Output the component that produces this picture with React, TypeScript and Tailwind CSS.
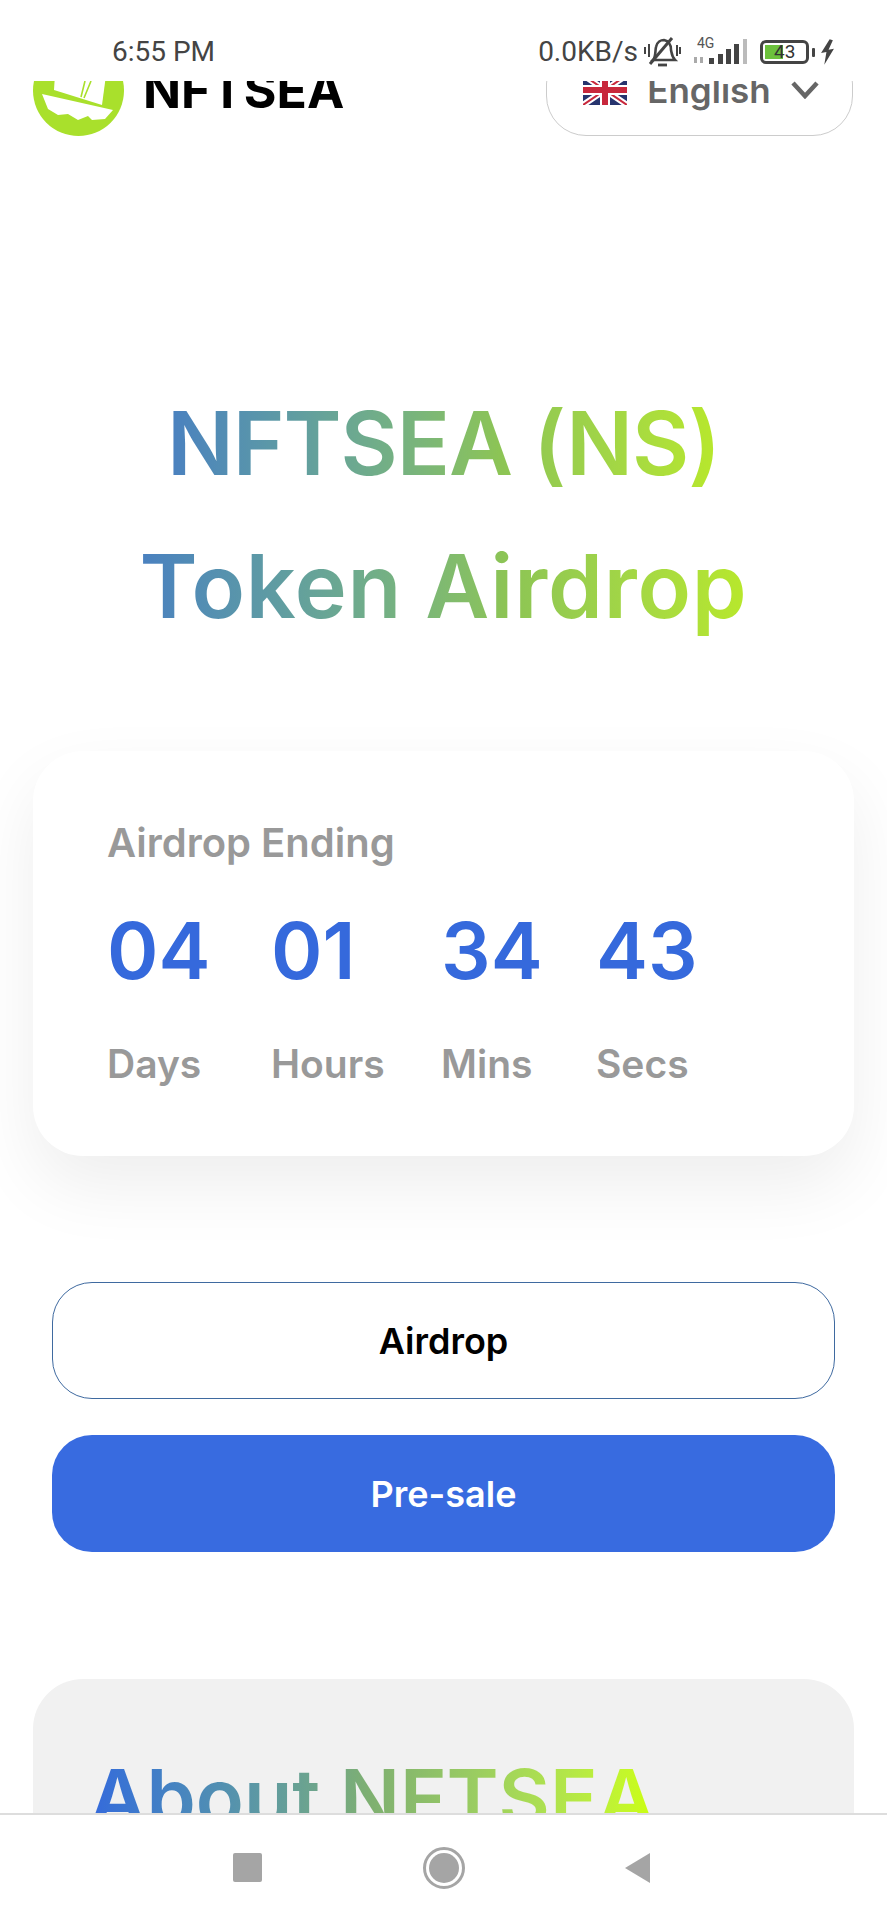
const titleFont = { fontFamily: 'Inter, "Liberation Sans", sans-serif' }

const timer = [
  { value: '04', label: 'Days' },
  { value: '01', label: 'Hours' },
  { value: '34', label: 'Mins' },
  { value: '43', label: 'Secs' },
]

function Logo() {
  return (
    <svg width="91" height="91" viewBox="0 0 91 91" className="shrink-0">
      <circle cx="45.5" cy="45.5" r="45.5" fill="#a9e02c" />
      <path d="M22 30 L73 30 L69 60 L21 45 Z" fill="#fff" />
      <path d="M9 49 L80 65 L72 74 L59 75 L55 71 L45 75 L35 69 L25 70 L15 64 Z" fill="#fff" />
      <path d="M52 36 L48 52 M58 36 L51 53" stroke="#a9e02c" strokeWidth="1.6" fill="none" />
    </svg>
  )
}

function UkFlag() {
  return (
    <svg width="44" height="30" viewBox="0 0 44 30" className="shrink-0">
      <rect width="44" height="30" fill="#27346e" />
      <path d="M0 0 L44 30 M44 0 L0 30" stroke="#fff" strokeWidth="6" />
      <path d="M0 0 L44 30 M44 0 L0 30" stroke="#c8283c" strokeWidth="2" />
      <path d="M22 0 V30 M0 15 H44" stroke="#fff" strokeWidth="10" />
      <path d="M22 0 V30 M0 15 H44" stroke="#c8283c" strokeWidth="6" />
    </svg>
  )
}

function StatusIcons() {
  return (
    <div className="flex items-center">
      <svg width="37" height="30" viewBox="0 0 37 30" fill="none" stroke="#444" className="ml-[6px]">
        <path d="M9 23 C12 20 11 14 12 10 C13 5 17 3 20 3 C25 4 27 8 27 13 C28 18 28 20 31 23 Z" strokeWidth="2.6" />
        <path d="M6 27 L28 1" strokeWidth="3" />
        <path d="M14 28 H23" strokeWidth="2.8" />
        <path d="M1 10 V17 M5 7 V20 M33 8 V19 M36 10 V17" strokeWidth="2" />
      </svg>
      <div className="relative ml-[12px] h-[26px] w-[55px]">
        <span className="absolute left-[4px] top-[-3px] text-[14px] leading-[15px] text-[#555]">4G</span>
        <svg width="55" height="26" viewBox="0 0 55 26" className="absolute left-0 top-0" fill="#444">
          <rect x="16" y="19" width="5" height="6" />
          <rect x="25" y="15" width="5" height="10" />
          <rect x="33" y="10" width="5" height="15" />
          <rect x="41" y="5" width="5" height="20" />
          <rect x="50" y="0" width="4" height="25" fill="#bbb" />
          <path d="M1 18 h3 v6 h-3z M7 18 h3 v6 h-3z" fill="#aaa" />
        </svg>
      </div>
      <div className="relative ml-[12px] flex h-[24px] w-[49px] items-center rounded-[6px] border-[3px] border-[#444]">
        <div className="ml-[2px] h-[14px] w-[18px] bg-[#6cc13c]" />
        <span className="absolute left-[11px] top-[-1px] text-[19px] leading-[20px] text-[#333]">43</span>
      </div>
      <div className="ml-[3px] h-[9px] w-[3px] rounded-[1px] bg-[#444]" />
      <svg width="15" height="26" viewBox="0 0 14 24" fill="#444" className="ml-[5px]">
        <path d="M9 0 L1 13 L6 12 L4 24 L13 9 L8 10 L12 1 Z" />
      </svg>
    </div>
  )
}

export default function App() {
  return (
    <div className="flex h-[1920px] w-[887px] flex-col overflow-hidden bg-white" style={{ fontFamily: 'Inter, sans-serif' }}>
      <div className="flex h-[81px] shrink-0 items-center justify-between bg-white pl-[112px] pr-[52px] pt-[23px] text-[28px] text-[#444]" style={{ fontFamily: 'Roboto, sans-serif' }}>
        <span>6:55 PM</span>
        <div className="flex items-center">
          <span>0.0KB/s</span>
          <StatusIcons />
        </div>
      </div>

      <main className="min-h-0 flex-1 overflow-hidden">
        <div className="mt-[-37px] flex items-center justify-between pl-[33px] pr-[34px]">
          <div className="flex items-center gap-[19px]">
            <Logo />
            <span className="text-[50px] font-bold leading-none text-black" style={titleFont}>NFTSEA</span>
          </div>
          <div className="flex h-[92px] w-[307px] items-center justify-center gap-[20px] rounded-[40px] border border-[#ccc] bg-white pl-[3px] text-[#666]">
            <UkFlag />
            <span className="text-[35px] font-semibold">English</span>
            <svg width="28" height="18" viewBox="0 0 28 18" fill="none" stroke="#666" strokeWidth="4.5"><path d="M2 2 L14 15 L26 2" /></svg>
          </div>
        </div>

        <h1 className="mt-[236px] flex flex-col items-center gap-[1px] text-[88px] font-semibold leading-[142px]" style={titleFont}>
          <span className="bg-gradient-to-r from-[#4a80c0] via-[#8cc455] via-60% to-[#b8e82a] bg-clip-text tracking-[-1px] text-transparent">NFTSEA (NS)</span>
          <span className="bg-gradient-to-r from-[#4a80c0] via-[#8cc455] via-60% to-[#b8e82a] bg-clip-text tracking-[0.8px] text-transparent">Token Airdrop</span>
        </h1>

        <section className="mx-[33px] mt-[94px] h-[405px] rounded-[50px] bg-white pl-[74px] pt-[67px] shadow-[0_30px_70px_rgba(0,0,0,0.07)]">
          <p className="text-[40px] font-semibold leading-[50px] text-[#999]">Airdrop Ending</p>
          <div className="mt-[38px] grid grid-cols-[164px_170px_155px_auto]">
            {timer.map((item) => (
              <div key={item.label}>
                <div className="text-[78px] font-semibold leading-[90px] text-[#3569dc]">{item.value}</div>
                <div className="mt-[44px] text-[39px] font-semibold leading-[48px] text-[#999]">{item.label}</div>
              </div>
            ))}
          </div>
        </section>

        <div className="mx-[52px] mt-[126px] flex flex-col gap-[36px]">
          <button className="h-[117px] rounded-[40px] border border-[#3f6aa0] bg-white text-[36px] font-semibold text-black">Airdrop</button>
          <button className="h-[117px] rounded-[40px] bg-[#386be0] text-[36px] font-semibold text-white">Pre-sale</button>
        </div>

        <section className="mx-[33px] mt-[127px] h-[400px] rounded-[50px] bg-[#f1f1f1] pl-[56px] pt-[68px]">
          <h2 className="inline-block bg-gradient-to-r from-[#3569dc] via-[#7fb070] via-50% to-[#ccff00] bg-clip-text text-[79px] font-semibold leading-[100px] text-transparent" style={titleFont}>About NFTSEA</h2>
        </section>
      </main>

      <nav className="flex h-[107px] shrink-0 items-center border-t-2 border-[#ddd] bg-white">
        <div className="ml-[233px] h-[29px] w-[29px] rounded-[2px] bg-[#a5a5a5]" />
        <div className="ml-[161px] flex h-[42px] w-[42px] items-center justify-center rounded-full border-[3px] border-[#a5a5a5]">
          <div className="h-[30px] w-[30px] rounded-full bg-[#a5a5a5]" />
        </div>
        <svg width="26" height="30" viewBox="0 0 26 30" className="ml-[159px]" fill="#a5a5a5"><path d="M26 0 V30 L1 15 Z" /></svg>
      </nav>
    </div>
  )
}
